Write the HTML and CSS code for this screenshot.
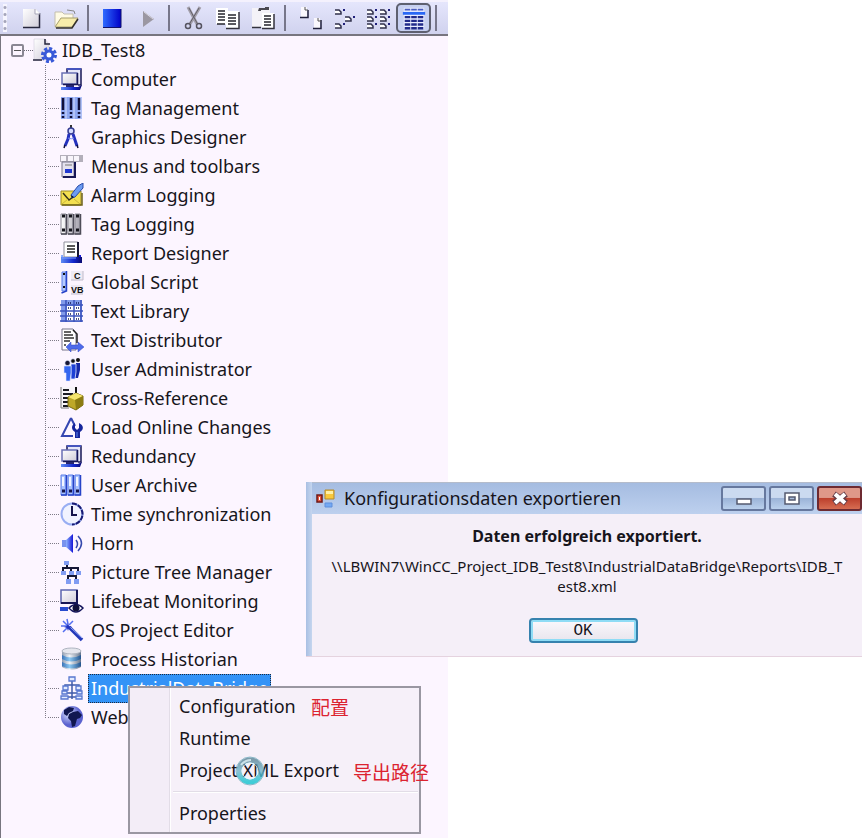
FILE: index.html
```
<!DOCTYPE html>
<html lang="en">
<head>
<meta charset="utf-8">
<title>IDB_Test8</title>
<link rel="stylesheet" href="styles.css">
</head>
<body>
<svg class="defs" aria-hidden="true">
  <defs>
    <linearGradient id="g-blue" x1="0" x2="1"><stop offset="0" stop-color="#8fb4ff"/><stop offset="1" stop-color="#1616d8"/></linearGradient>
    <linearGradient id="g-square" x1="0" x2="1"><stop offset="0" stop-color="#2f6bff"/><stop offset="1" stop-color="#0000c8"/></linearGradient>
    <linearGradient id="g-base" x1="0" x2="1"><stop offset="0" stop-color="#5f8cf5"/><stop offset=".6" stop-color="#1226cc"/><stop offset="1" stop-color="#0a0a70"/></linearGradient>
    <linearGradient id="g-page" x1="0" x2="1" y2="1"><stop offset="0" stop-color="#ffffff"/><stop offset="1" stop-color="#cfcbd8"/></linearGradient>
    <linearGradient id="g-grey" x1="0" x2="1"><stop offset="0" stop-color="#fff"/><stop offset="1" stop-color="#a5a2ad"/></linearGradient>
    <linearGradient id="g-drum" x1="0" x2="1"><stop offset="0" stop-color="#8d9bb0"/><stop offset=".4" stop-color="#f1f4f8"/><stop offset="1" stop-color="#65758c"/></linearGradient>
    <linearGradient id="g-band" x1="0" x2="1"><stop offset="0" stop-color="#3b74b8"/><stop offset=".4" stop-color="#8cc8f2"/><stop offset="1" stop-color="#23548f"/></linearGradient>
    <radialGradient id="g-globe" cx=".35" cy=".35"><stop offset="0" stop-color="#dce4ff"/><stop offset="1" stop-color="#5b62cf"/></radialGradient>
    <linearGradient id="g-ring" x2="0" y2="1"><stop offset="0" stop-color="#5d8799"/><stop offset=".5" stop-color="#72b5cb"/><stop offset="1" stop-color="#12c4cf"/></linearGradient>
    <symbol id="i-monitors" viewBox="0 0 24 25">
      <path d="M7 6V2h14v16h-3" fill="#e6e6f8" stroke="#171755" stroke-width="1.5"/><path d="M7 2h14" stroke="#4654bd" stroke-width="2"/>
      <path d="M2 6h15v11H2z" fill="url(#g-page)" stroke="#6970b4" stroke-width="1.5"/><path d="M17.500 6v11.500H3" fill="none" stroke="#171755" stroke-width="1.5"/>
      <path d="M1 20h17l4-2-2 5H1z" fill="url(#g-base)"/><path d="M6 18h8v2H6z" fill="#26266e"/>
    </symbol>
    <symbol id="i-bars" viewBox="0 0 24 25">
      <path d="M1 1h21v22H1z" fill="#8fa8f2"/><path d="M5 1h2v22H5zM13 1h2v22h-2zM20 1h2v22h-2z" fill="#b2c3f8"/>
      <path d="M3 2v12M11 2v12M19 2v12" stroke="#10103b" stroke-width="2.500"/><path d="M3 16v2m0 2v2M11 16v2m0 2v2M19 16v2m0 2v2" stroke="#10103b" stroke-width="2.500"/>
    </symbol>
    <symbol id="i-compass" viewBox="0 0 24 25">
      <path d="M11 0v4" stroke="#333" stroke-width="2"/><circle cx="11" cy="6" r="3" fill="#d5dcff" stroke="#343b91" stroke-width="1.5"/>
      <path d="M9 9l-1 5-3 7M13 9l2 6 2 6" fill="none" stroke="#2431bd" stroke-width="3"/><path d="M8 13c2 1 5 1 6 0" fill="none" stroke="#7a8cf0"/><path d="M5 20l-1 3M17 20l1 3" stroke="#10103b" stroke-width="1.500"/>
    </symbol>
    <symbol id="i-menus" viewBox="0 0 24 25">
      <path d="M0 1h23v7H0z" fill="#b3afba"/><path d="M1 2h5v5H1zM8 2h5v5H8zM14 2h5v5h-5z" fill="#f8f5fb"/>
      <path d="M2 8h12v15H2z" fill="#e5e2ee" stroke="#77758a"/><path d="M15 8v15H3" fill="none" stroke="#171755" stroke-width="2"/><path d="M5 11h7" stroke="#777"/><path d="M5 15h7v4H5z" fill="#2038d0"/>
    </symbol>
    <symbol id="i-alarm" viewBox="0 0 24 25">
      <path d="M1 8h20v14H1z" fill="#f3df51" stroke="#9c8b25"/><path d="M2 22h20V10" fill="none" stroke="#6e6118" stroke-width="1.5"/><path d="M3 10l6 7 4-3" fill="none" stroke="#33301a" stroke-width="1.500"/><path d="M2 21l6-5m6 0l6 5" fill="none" stroke="#c9b63a"/>
      <path d="M23 0l-5 3-7 9 1 3 3-1 8-9z" fill="#6d9cf2" stroke="#294aa8"/><path d="M11 12l1 3 2-1z" fill="#111"/>
    </symbol>
    <symbol id="i-files" viewBox="0 0 24 25">
      <g fill="url(#g-grey)" stroke="#8a8893"><path d="M1 2h5v20H1zM8 2h5v20H8zM15 2h5v20h-5z"/></g>
      <path d="M6.500 2v20H1M13.500 2v20H8M20.500 2v20h-6" fill="none" stroke="#4e4c58" stroke-width="1.5"/><path d="M2 4h3M9 4h3M16 4h3M2 18h3M9 18h3M16 18h3" stroke="#15151c" stroke-width="3"/>
    </symbol>
    <symbol id="i-bluefiles" viewBox="0 0 24 25">
      <g fill="#a9c3ff" stroke="#5c7ee8"><path d="M1 2h5v20H1zM8 2h5v20H8zM15 2h5v20h-5z"/></g>
      <path d="M6.500 2v20H1M13.500 2v20H8M20.500 2v20h-6" fill="none" stroke="#2743c8" stroke-width="1.500"/><path d="M3 4v9M10 4v9M17 4v9" stroke="#f4f6ff" stroke-width="2"/><path d="M2 18h3M9 18h3M16 18h3" stroke="#15154c" stroke-width="3"/>
    </symbol>
    <symbol id="i-printer" viewBox="0 0 24 25">
      <path d="M4 1h14v15H4z" fill="#fff" stroke="#8e8e9a"/><path d="M18 1v15" stroke="#171733" stroke-width="2"/><path d="M7 5h8M7 8h8M7 11h8" stroke="#222" stroke-width="1.5"/>
      <path d="M1 14h2v2h16v-2h2v6H1z" fill="url(#g-blue)"/><path d="M1 16h21v6H1z" fill="url(#g-base)"/><path d="M2 17h14" stroke="#7da2ff"/>
    </symbol>
    <symbol id="i-script" viewBox="0 0 24 25">
      <path d="M2 2h4v19H2z" fill="#b5caff" stroke="#5c7ee8"/><path d="M6.500 1v20l-5 2" fill="none" stroke="#2743c8" stroke-width="1.500"/><path d="M3 4h2M3 17h2" stroke="#111" stroke-width="2"/>
      <path d="M11 1h12v9H11zM11 15h12v9H11z" fill="#eeeaf4"/><path d="M11 10h12V1M11 24h12" fill="none" stroke="#c0bccb"/>
      <text class="glyph" x="14" y="9">C</text><text class="glyph" x="11" y="23">VB</text>
    </symbol>
    <symbol id="i-library" viewBox="0 0 24 25">
      <path d="M1 1h21v22H1z" fill="#829be9"/><path d="M7 7h13v15H7z" fill="#fff"/><path d="M6 1v22M14 1v22M21 1v22M0 6h23M0 12h23M0 17h23M0 22h23" stroke="#3c54bd" stroke-width="1.500"/>
      <path d="M8 4h4m4 0h4M8 9h4m4 0h4M8 15h4m4 0h4M8 20h4m4 0h4" stroke="#111b57" stroke-width="1.5" stroke-dasharray="1 1"/>
    </symbol>
    <symbol id="i-distribute" viewBox="0 0 24 25">
      <path d="M2 1h11l3 4v17H2z" fill="#fff" stroke="#77758a"/><path d="M13 2l4 4v9" fill="none" stroke="#222" stroke-width="1.5"/><path d="M4 4h7M4 7h9M4 10h10M4 13h6M4 17h2" stroke="#333" stroke-width="1.500"/>
      <path d="M6 19l5-5v3h7v-3l6 5-6 5v-3h-7v3z" fill="#4d6bea" stroke="#3147c2" stroke-width=".5"/>
    </symbol>
    <symbol id="i-users" viewBox="0 0 24 25">
      <g fill="#1428a9"><circle cx="18" cy="3" r="2" fill="#111"/><path d="M16 6h4v7l-2 8h-3z"/></g><g fill="#1c40d6" stroke="#dfe6ff" stroke-width=".8"><circle cx="13" cy="4" r="2.300" fill="#111"/><path d="M11 7h5v8l-1 7h-4z"/></g><g fill="#3466ef" stroke="#dfe6ff" stroke-width=".6"><circle cx="7.500" cy="6" r="2.600" fill="#151533"/><path d="M4 9h7v7l-1 8H6v-8H4z"/></g>
    </symbol>
    <symbol id="i-cross" viewBox="0 0 24 25">
      <path d="M1 1h15v21H1z" fill="#f7f5f9"/><path d="M3 4h6M3 8h10M3 12h6M3 16h5M3 20h5" stroke="#1a1a22" stroke-width="2"/><path d="M1 1v21h8" fill="none" stroke="#777"/><path d="M16 1v6" stroke="#111" stroke-width="2"/>
      <path d="M8 11l8-4 7 3v9l-7 5-8-4z" fill="#bea828" stroke="#786b13"/><path d="M8 11l8-4 7 3-8 4z" fill="#f4e56d"/><path d="M15 14l8-4v9l-7 5z" fill="#8c7c12"/>
    </symbol>
    <symbol id="i-load" viewBox="0 0 24 25">
      <path d="M11 3L2 21h11M11 3l4 8" fill="none" stroke="#3446b1" stroke-width="2"/><path d="M15 8v5l2 2 2-2V8c5 2 5 7 1 9v6h-5v-6c-4-2-4-7 0-9z" fill="#16269c"/><path d="M17 17v5" stroke="#5e83ef"/>
    </symbol>
    <symbol id="i-clock" viewBox="0 0 24 25">
      <circle cx="12" cy="12" r="10.500" fill="#f0f2ff" stroke="#99aef3" stroke-width="2"/><path d="M12 1.500a10.500 10.500 0 0 1 0 21" fill="none" stroke="#191a73" stroke-width="2" stroke-dasharray="5 1"/><path d="M12 4v9h5" fill="none" stroke="#14144c" stroke-width="2"/>
    </symbol>
    <symbol id="i-horn" viewBox="0 0 24 25">
      <path d="M2 9h4v7H2z" fill="#7892ee"/><path d="M6 9l7-6v19l-7-6z" fill="url(#g-blue)"/><path d="M16 9q3 4 0 8M18 5q7 7 0 15" fill="none" stroke="#3548ad" stroke-width="1.5"/>
    </symbol>
    <symbol id="i-tree" viewBox="0 0 24 25">
      <path d="M7 5v3M3 13V8h15v5M11 8v8M8 20v-4h8v4" fill="none" stroke="#151736" stroke-width="2"/><g fill="#819cf2"><path d="M4 1h5v4H4zM1 11h5v4H1zM9 11h5v4H9zM16 11h5v4h-5zM6 19h5v5H6zM14 19h5v5h-5z"/></g>
    </symbol>
    <symbol id="i-lifebeat" viewBox="0 0 24 25">
      <path d="M1 1h16v13H1z" fill="url(#g-page)" stroke="#5c65ae" stroke-width="1.5"/><path d="M17 1v13H1" fill="none" stroke="#171755" stroke-width="2"/><path d="M0 18h8v4H0z" fill="#284bce"/><path d="M9 19q7-7 14 0-7 8-14 0z" fill="#fff" stroke="#14145c" stroke-width="1.500"/><circle cx="16" cy="19" r="3.500" fill="#11113a"/>
    </symbol>
    <symbol id="i-wand" viewBox="0 0 24 25">
      <path d="M7 1l1 5M1 8h6M3 3l5 5M13 3L9 7M3 14l5-5" stroke="#526ef0" stroke-width="1.500"/><path d="M9 9l13 13" stroke="#2338b9" stroke-width="3.500"/><path d="M10 9l12 11" stroke="#98adf8"/><path d="M8 5l1 3 3 1-3 1-1 3-1-3-3-1 3-1z" fill="#2333bf"/>
    </symbol>
    <symbol id="i-drum" viewBox="0 0 24 25">
      <path d="M2 4v16q9 6 19 0V4z" fill="url(#g-drum)"/><path d="M2 8q9 5 19 0v4q-10 5-19 0zM2 15q9 5 19 0v4q-10 5-19 0z" fill="url(#g-band)"/><ellipse cx="11.500" cy="4" rx="9.500" ry="3" fill="#e5e6ed" stroke="#aeb4c0"/>
    </symbol>
    <symbol id="i-bridge" viewBox="0 0 24 25">
      <path d="M12 5v18M5 12V9h14v3M7 17h10M7 21h10" fill="none" stroke="#3f5ba9" stroke-width="1.500"/><g fill="#e3ebff" stroke="#5877cf" stroke-width="1.300"><path d="M9 1h6v4H9zM3 10h5v4H3zM16 10h5v4h-5zM2 15h5v3H2zM17 15h5v3h-5zM1 20h7v3H1zM16 20h6v3h-6z"/></g>
    </symbol>
    <symbol id="i-globe" viewBox="0 0 24 25">
      <circle cx="12" cy="12" r="11" fill="url(#g-globe)"/><path d="M4 5l5-3 5 1-1 3-4 2-2 3-3-2zM13 7l5-1 4 4-2 3-3 1-2 7-3 1-1-6-3-3 1-4z" fill="#111750"/>
    </symbol>
  </defs>
</svg>

<main class="explorer">
  <div class="toolbar" role="toolbar" aria-label="Standard">
    <span class="grip"></span>
    <button class="tool" aria-label="New"><svg viewBox="0 0 28 28"><path d="M6 5h13l4 4v14H6z" fill="url(#g-page)"/><path d="M22.500 9v14.500H6" fill="none" stroke="#26263c" stroke-width="1.500"/><path d="M18 5v5h5" fill="#fff" stroke="#a7a5b8"/></svg></button>
    <button class="tool" aria-label="Open"><svg viewBox="0 0 28 28"><path d="M3 22V8h7l2 2h9v4" fill="#fffbe4" stroke="#c4bfae"/><path d="M3 23l6-9h17l-6 9z" fill="#f8edab" stroke="#a79f70"/><path d="M4 24h16l6-9" fill="none" stroke="#34302b" stroke-width="1.500"/><path d="M15 6l7 1 1 3" fill="none" stroke="#888"/></svg></button>
    <span class="divider"></span>
    <button class="tool" aria-label="Stop"><svg viewBox="0 0 28 28"><path d="M5 5h18v18H5z" fill="url(#g-square)"/><path d="M23 5v18.500H5" fill="none" stroke="#111168" stroke-width="1"/></svg></button>
    <button class="tool" aria-label="Activate"><svg viewBox="0 0 28 28"><path d="M10 7l11 8-11 8z" fill="#9b97a2"/><path d="M11 8l9 7" stroke="#d9d6df"/></svg></button>
    <span class="divider"></span>
    <button class="tool" aria-label="Cut"><svg viewBox="0 0 28 28"><path d="M9 3l9 17M21 3L11 20" stroke="#a29ea9" stroke-width="3"/><path d="M10 4l8 15M20 4l-9 15" stroke="#62606b"/><circle cx="9" cy="22" r="2.500" fill="none" stroke="#55535f" stroke-width="1.500"/><circle cx="20" cy="22" r="2.500" fill="none" stroke="#55535f" stroke-width="1.500"/></svg></button>
    <button class="tool" aria-label="Copy"><svg viewBox="0 0 28 28"><path d="M2 4h12v16H2zM12 7h13v17H12z" fill="#fff"/><path d="M4 7h7M4 10h7M4 13h7M4 16h7M3 20h8M14 11h8M14 14h8M14 17h8M14 20h8" stroke="#25242c" stroke-width="1.500"/><path d="M25 8v16.500H12" fill="none" stroke="#33323d" stroke-width="1.500"/></svg></button>
    <button class="tool" aria-label="Paste"><svg viewBox="0 0 28 28"><path d="M3 4h18v19H3z" fill="#f4f2f8"/><path d="M10 4h6v-1h4v3h-8v1H9z" fill="#4a4951"/><path d="M13 9h12v15H13z" fill="#fff"/><path d="M15 12h7M15 15h7M15 18h7M15 21h7" stroke="#25242c" stroke-width="1.500"/><path d="M25 10v14.500H13M3 23.500h9" fill="none" stroke="#33323d" stroke-width="1.500"/></svg></button>
    <span class="divider"></span>
    <button class="tool" aria-label="Large icons"><svg viewBox="0 0 28 28"><path d="M6 3h6v10H6zM19 14h6v10h-6z" fill="#faf8fd"/><path d="M13 6v7.500H5M26 16v8.500h-8" fill="none" stroke="#20203b" stroke-width="1.500"/><path d="M10 3v3h3M23 14v3h3" fill="none" stroke="#555"/></svg></button>
    <button class="tool" aria-label="Small icons"><svg viewBox="0 0 28 28"><g id="small-mark"><path d="M5 6h5v4H5z" fill="#fff"/><path d="M5 6h4l2 2v2H5" fill="none" stroke="#30304b" stroke-width="1.500"/><path d="M13 5h2v2h-2z" fill="#20207b"/></g><use href="#small-mark" x="10" y="7"/><use href="#small-mark" y="14"/></svg></button>
    <button class="tool" aria-label="List"><svg viewBox="0 0 28 28"><use href="#small-mark" x="-3"/><use href="#small-mark" x="-3" y="7"/><use href="#small-mark" x="-3" y="14"/><use href="#small-mark" x="10"/><use href="#small-mark" x="10" y="7"/><use href="#small-mark" x="10" y="14"/></svg></button>
    <button class="tool pressed" aria-label="Details" aria-pressed="true"><svg viewBox="0 0 28 28"><path d="M3 3h22v23H3z" fill="#e9edff"/><path d="M4 4h6v2H4zM11 4h6v2h-6zM18 4h6v2h-6z" fill="#4b5cc0"/><path d="M2 9h24" stroke="#2968f5" stroke-width="3"/><path d="M4 13h20M4 17h20M4 21h20M4 25h20" stroke="#202a8a" stroke-width="2.500" stroke-dasharray="6 1"/></svg></button>
    <span class="divider"></span>
  </div>
  <div class="tree">
    <div class="row root"><button class="toggle" aria-label="Collapse"></button><span class="link"></span><svg class="root-icon" viewBox="0 0 24 25"><path d="M1 1h11l4 5v16H1z" fill="url(#g-page)" stroke="#c8c5d6" stroke-width=".5"/><path d="M0 22h9M12 1v5h5" fill="none" stroke="#25253d" stroke-width="1.500"/><circle cx="16" cy="17" r="6.500" fill="none" stroke="#3859d8" stroke-width="3" stroke-dasharray="3 2"/><circle cx="16" cy="17" r="4" fill="#fff" stroke="#3859d8" stroke-width="3"/></svg><span class="label">IDB_Test8</span></div>
    <ul class="branch">
      <li class="row"><svg><use href="#i-monitors"/></svg><span class="label">Computer</span></li>
      <li class="row"><svg><use href="#i-bars"/></svg><span class="label">Tag Management</span></li>
      <li class="row"><svg><use href="#i-compass"/></svg><span class="label">Graphics Designer</span></li>
      <li class="row"><svg><use href="#i-menus"/></svg><span class="label">Menus and toolbars</span></li>
      <li class="row"><svg><use href="#i-alarm"/></svg><span class="label">Alarm Logging</span></li>
      <li class="row"><svg><use href="#i-files"/></svg><span class="label">Tag Logging</span></li>
      <li class="row"><svg><use href="#i-printer"/></svg><span class="label">Report Designer</span></li>
      <li class="row"><svg><use href="#i-script"/></svg><span class="label">Global Script</span></li>
      <li class="row"><svg><use href="#i-library"/></svg><span class="label">Text Library</span></li>
      <li class="row"><svg><use href="#i-distribute"/></svg><span class="label">Text Distributor</span></li>
      <li class="row"><svg><use href="#i-users"/></svg><span class="label">User Administrator</span></li>
      <li class="row"><svg><use href="#i-cross"/></svg><span class="label">Cross-Reference</span></li>
      <li class="row"><svg><use href="#i-load"/></svg><span class="label">Load Online Changes</span></li>
      <li class="row"><svg><use href="#i-monitors"/></svg><span class="label">Redundancy</span></li>
      <li class="row"><svg><use href="#i-bluefiles"/></svg><span class="label">User Archive</span></li>
      <li class="row"><svg><use href="#i-clock"/></svg><span class="label">Time synchronization</span></li>
      <li class="row"><svg><use href="#i-horn"/></svg><span class="label">Horn</span></li>
      <li class="row"><svg><use href="#i-tree"/></svg><span class="label">Picture Tree Manager</span></li>
      <li class="row"><svg><use href="#i-lifebeat"/></svg><span class="label">Lifebeat Monitoring</span></li>
      <li class="row"><svg><use href="#i-wand"/></svg><span class="label">OS Project Editor</span></li>
      <li class="row"><svg><use href="#i-drum"/></svg><span class="label">Process Historian</span></li>
      <li class="row"><svg><use href="#i-bridge"/></svg><span class="label selected">IndustrialDataBridge</span></li>
      <li class="row"><svg><use href="#i-globe"/></svg><span class="label">Web</span></li>
    </ul>
  </div>
</main>

<div class="menu" role="menu">
  <button class="item" role="menuitem">Configuration</button>
  <button class="item" role="menuitem">Runtime</button>
  <button class="item" role="menuitem">Project XML Export</button>
  <hr class="rule">
  <button class="item" role="menuitem">Properties</button>
  <span class="note note-config" lang="zh">配置</span>
  <span class="note note-export" lang="zh">导出路径</span>
  <svg class="busy" viewBox="0 0 30 30"><circle cx="15" cy="15" r="11" fill="none" stroke="url(#g-ring)" stroke-width="5" opacity=".8"/><circle cx="15" cy="15" r="14" fill="none" stroke="#67a5b8" opacity=".7"/><circle cx="15" cy="15" r="8" fill="none" stroke="#dcfbff" opacity=".8"/><path d="M6 9q4-5 10-5" fill="none" stroke="#e9fcff" stroke-width="2" opacity=".7"/></svg>
</div>

<section class="dialog" role="dialog" aria-labelledby="dialog-title">
  <header class="titlebar">
    <svg class="app-icon" viewBox="0 0 20 20"><path d="M9 1h9v9H9z" fill="#f8c83c" stroke="#b58b2c"/><path d="M10 2h7v3h-7z" fill="#fff0a5"/><path d="M1 6h5v7H1z" fill="#e7583f" stroke="#6f1816" stroke-width="1.500"/><path d="M3 8h1v3H3z" fill="#fff"/><path d="M9 14h7v4H9z" fill="#74a9f3" stroke="#5f8fdc"/></svg>
    <h1 class="title" id="dialog-title">Konfigurationsdaten exportieren</h1>
    <div class="controls">
      <button class="control" aria-label="Minimize"><svg viewBox="0 0 24 20"><path d="M5 10h14v5H5z" fill="#fff" stroke="#555b70" stroke-width="1.500"/></svg></button>
      <button class="control" aria-label="Maximize"><svg viewBox="0 0 24 20"><path d="M5 4h14v11H5z" fill="#fff" stroke="#555b70" stroke-width="1.500"/><path d="M9 8h6v3H9z" fill="#a9bddc" stroke="#555b70" stroke-width="1.500"/></svg></button>
      <button class="control close" aria-label="Close"><svg viewBox="0 0 24 20"><path d="M6 5l12 9M18 5L6 14" stroke="#633b46" stroke-width="6"/><path d="M7 5l10 9M17 5L7 14" stroke="#fff" stroke-width="4"/></svg></button>
    </div>
  </header>
  <div class="content">
    <p class="headline">Daten erfolgreich exportiert.</p>
    <p class="path">\\LBWIN7\WinCC_Project_IDB_Test8\IndustrialDataBridge\Reports\IDB_T<br>est8.xml</p>
    <button class="ok">OK</button>
  </div>
</section>
</body>
</html>
```
FILE: styles.css
```
* { box-sizing: border-box; }
body {
  margin: 0;
  min-height: 100vh;
  position: relative;
  display: flex;
  background: #fff;
  color: #17151c;
  font: 18px/29px "Noto Sans", "Open Sans", sans-serif;
}
button { font: inherit; color: inherit; padding: 0; margin: 0; border: 0; background: none; }
.defs { position: absolute; width: 0; height: 0; }
.glyph { font: bold 9px "Liberation Sans", sans-serif; fill: #111; }

.explorer { width: 52%; min-height: 100vh; background: #fcf5ff; }
.toolbar {
  display: flex;
  align-items: center;
  height: 36px;
  border-top: 2px solid #f4f1fd;
  border-bottom: 2px solid #77757f;
  background: linear-gradient(#e5e6fc, #d0d2ee);
}
.grip { width: 4px; height: 28px; margin: 0 6px 0 3px; background: radial-gradient(circle, #a5a5ba 1px, #f6f5ff 2px) 0 0 / 4px 7px; }
.tool { display: flex; align-items: center; justify-content: center; width: 35px; height: 30px; border-radius: 5px; }
.tool svg { width: 28px; height: 28px; flex: none; }
.pressed { border: 2px solid #5e6070; background: #c7d0f1; }
.pressed svg { width: 26px; height: 26px; }
.divider { width: 2px; height: 26px; margin: 0 5px 0 4px; background: #77768a; }

.tree { border-left: 1px solid #77757f; min-height: calc(100vh - 36px); }
.row { display: flex; align-items: center; height: 29px; }
.row svg { width: 24px; height: 25px; flex: none; }
.root { padding-left: 10px; }
.toggle { width: 13px; height: 13px; border: 2px solid #8a8793; border-radius: 2px; background: linear-gradient(#555, #555) center / 7px 1px no-repeat; }
.link { width: 9px; border-top: 1px dotted #6d6a76; }
.root .label { padding-left: 5px; }
.branch {
  list-style: none;
  margin: 0 0 0 44px;
  padding: 0;
  background: repeating-linear-gradient(#7d7a86 0 1px, transparent 1px 2px) 0 0 / 1px calc(100% - 14px) no-repeat;
}
.branch .row::before { content: ""; width: 12px; margin-left: 3px; height: 1px; background: repeating-linear-gradient(90deg, #7d7a86 0 1px, transparent 1px 2px); }
.label { padding: 0 4px; white-space: nowrap; }
.branch .label { margin-left: 3px; }
.branch .selected { height: 29px; line-height: 27px; padding: 0 2px; margin-left: 4px; border: 1px dotted #1d2a40; background: #3393f7; color: #fff; }

.menu {
  position: absolute;
  left: 128px;
  top: 686px;
  width: 293px;
  padding: 2px 1px 3px;
  border: 2px solid #9a97a2;
  background: linear-gradient(90deg, #f3edf7 0 39px, #e2dde7 39px 40px, #fff 40px 41px, #f6f0f9 41px);
}
.item { display: block; width: 100%; height: 32px; padding-left: 48px; text-align: left; }
.rule { height: 2px; margin: 5px 0 4px 42px; border: 0; border-top: 1px solid #e2dde7; background: #fff; }
.note { position: absolute; color: #dc2330; font: 19px/24px "Noto Sans CJK SC", sans-serif; white-space: nowrap; }
.note-config { left: 181px; top: 7px; }
.note-export { left: 223px; top: 72px; }
.busy { position: absolute; left: 105px; top: 68px; width: 30px; height: 30px; }

.dialog {
  position: absolute;
  right: 0;
  top: 482px;
  width: 556px;
  padding-left: 6px;
  border-bottom: 1px solid #e5d3df;
  background: linear-gradient(90deg, #a9bfe3, #c5d6ef 6px, #b4c8e8);
}
.titlebar { display: flex; align-items: center; height: 32px; padding-left: 4px; border-top: 1px solid #b5bccb; background: linear-gradient(#a5bce1, #bdd0ee); }
.app-icon { width: 20px; height: 20px; }
.title { flex: 1; margin: 0; padding-left: 8px; font-size: 18px; font-weight: 400; line-height: 29px; white-space: nowrap; }
.controls { display: flex; gap: 3px; }
.control {
  display: flex;
  align-items: center;
  justify-content: center;
  width: 45px;
  height: 25px;
  border: 2px solid #66789e;
  border-radius: 3px;
  background: linear-gradient(#cbdaf0 45%, #9cb4d8 50%, #bad0ec);
}
.control svg { width: 24px; height: 20px; }
.close { border-color: #6d2a31; background: linear-gradient(#df9889 45%, #bd402d 50%, #d66d52); }
.content { display: flex; flex-direction: column; align-items: center; height: 142px; padding-top: 10px; background: #f5eff8; }
.headline { margin: 0; font-size: 16px; font-weight: 700; line-height: 24px; }
.path { margin: 8px 0 0; font-size: 15px; line-height: 20px; text-align: center; white-space: nowrap; }
.ok { width: 109px; height: 25px; margin: 22px 8px 0 0; border: 2px solid #3682ae; border-radius: 4px; box-shadow: inset 0 0 0 2px #8fdcf5; background: linear-gradient(#fbf8fc, #e8e5ed); font: 16px/20px "Liberation Mono", monospace; }
```
